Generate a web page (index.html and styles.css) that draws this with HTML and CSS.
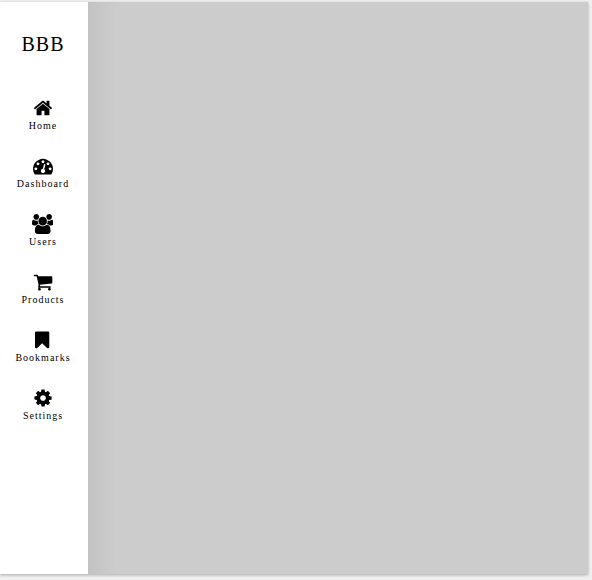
FILE: index.html
```html
<!doctype html>
<html>
<head>
	<meta charset="utf-8">
	<title>BBB</title>
	<link rel="stylesheet" href="styles.css">
</head>
<body>
	<div class="shell">
		<aside class="sidebar">
			<div class="brand">BBB</div>
			<nav class="nav">
				<a class="nav-item" href="#">
					<svg class="icon" viewBox="0 0 1792 1792"><path d="M1472 992v480q0 26-19 45t-45 19h-384v-384h-256v384h-384q-26 0-45-19t-19-45v-480q0-1 .5-3t.5-3l575-474 575 474q1 2 1 6zm223-69l-62 74q-8 9-21 11h-3q-13 0-21-7l-692-577-692 577q-12 8-24 7-13-2-21-11l-62-74q-8-10-7-23.500t11-21.500l719-599q32-26 76-26t76 26l244 204v-195q0-14 9-23t23-9h192q14 0 23 9t9 23v408l219 182q10 8 11 21.500t-7 23.500z"/></svg>
					<span>Home</span>
				</a>
				<a class="nav-item" href="#">
					<svg class="icon" viewBox="0 0 1792 1792"><path d="M384 1152q0-53-37.500-90.500t-90.500-37.500-90.500 37.500-37.500 90.500 37.500 90.500 90.500 37.500 90.500-37.500 37.500-90.500zm192-448q0-53-37.500-90.500t-90.500-37.500-90.500 37.500-37.500 90.500 37.500 90.500 90.500 37.500 90.500-37.500 37.500-90.500zm428 481l101-382q6-26-7.500-48.500t-38.500-29.500-48 6.500-30 39.500l-101 382q-60 5-107 43.500t-63 98.500q-20 77 20 146t117 89 146-20 89-117q16-60-6-117t-72-91zm660-33q0-53-37.500-90.500t-90.500-37.500-90.500 37.500-37.500 90.500 37.500 90.500 90.500 37.500 90.500-37.500 37.500-90.500zm-640-640q0-53-37.500-90.500t-90.500-37.500-90.500 37.500-37.500 90.500 37.500 90.500 90.500 37.500 90.500-37.500 37.500-90.500zm448 192q0-53-37.500-90.500t-90.500-37.500-90.500 37.500-37.500 90.500 37.500 90.500 90.500 37.500 90.500-37.500 37.500-90.500zm320 448q0 261-141 483-19 29-54 29h-1402q-35 0-54-29-141-221-141-483 0-182 71-348t191-286 286-191 348-71 348 71 286 191 191 286 71 348z"/></svg>
					<span>Dashboard</span>
				</a>
				<a class="nav-item" href="#">
					<svg class="icon" viewBox="0 0 1920 1792"><path d="M593 896q-162 5-265 128h-134q-82 0-138-40.500t-56-118.500q0-353 124-353 6 0 43.500 21t97.500 42.500 119 21.500q67 0 133-23-5 37-5 66 0 139 81 256zm1071 637q0 120-73 189.500t-194 69.500h-874q-121 0-194-69.500t-73-189.500q0-53 3.500-103.500t14-109 26.500-108.500 43-97.500 62-81 85.500-53.500 111.500-20q10 0 43 21.500t73 48 107 48 135 21.500 135-21.500 107-48 73-48 43-21.500q61 0 111.500 20t85.500 53.500 62 81 43 97.500 26.500 108.500 14 109 3.500 103.500zm-1024-1277q0 106-75 181t-181 75-181-75-75-181 75-181 181-75 181 75 75 181zm704 384q0 159-112.500 271.500t-271.500 112.500-271.500-112.500-112.500-271.500 112.500-271.500 271.500-112.500 271.500 112.500 112.500 271.500zm576 225q0 78-56 118.500t-138 40.500h-134q-103-123-265-128 81-117 81-256 0-29-5-66 66 23 133 23 59 0 119-21.500t97.500-42.500 43.500-21q124 0 124 353zm-128-609q0 106-75 181t-181 75-181-75-75-181 75-181 181-75 181 75 75 181z"/></svg>
					<span>Users</span>
				</a>
				<a class="nav-item" href="#">
					<svg class="icon" viewBox="0 0 1792 1792"><path d="M704 1536q0 52-38 90t-90 38-90-38-38-90 38-90 90-38 90 38 38 90zm896 0q0 52-38 90t-90 38-90-38-38-90 38-90 90-38 90 38 38 90zm128-1088v512q0 24-16.500 42.500t-40.500 21.500l-1044 122q13 60 13 70 0 16-24 64h920q26 0 45 19t19 45-19 45-45 19h-1024q-26 0-45-19t-19-45q0-11 8-31.500t16-36 21.500-40 15.500-29.500l-177-823h-204q-26 0-45-19t-19-45 19-45 45-19h256q16 0 28.500 6.500t19.500 15.500 13 24.500 8 26 5.500 29.500 4.500 26h1201q26 0 45 19t19 45z"/></svg>
					<span>Products</span>
				</a>
				<a class="nav-item" href="#">
					<svg class="icon" viewBox="0 0 1280 1792"><path d="M1164 128q23 0 44 9 33 13 52.500 41t19.500 62v1289q0 34-19.500 62t-52.500 41q-19 8-44 8-48 0-83-32l-441-424-441 424q-36 33-83 33-23 0-44-9-33-13-52.500-41t-19.500-62v-1289q0-34 19.500-62t52.500-41q21-9 44-9h1048z"/></svg>
					<span>Bookmarks</span>
				</a>
				<a class="nav-item" href="#">
					<svg class="icon" viewBox="0 0 1792 1792"><path d="M1152 896q0-106-75-181t-181-75-181 75-75 181 75 181 181 75 181-75 75-181zm512-109v222q0 12-8 23t-20 13l-185 28q-19 54-39 91 35 50 107 138 10 12 10 25t-9 23q-27 37-99 108t-94 71q-12 0-26-9l-138-108q-44 23-91 38-16 136-29 186-7 28-36 28h-222q-14 0-24.500-8.500t-11.500-21.500l-28-184q-49-16-90-37l-141 107q-10 9-25 9-14 0-25-11-126-114-165-168-7-10-7-23 0-12 8-23 15-21 51-66.500t54-70.500q-27-50-41-99l-183-27q-13-2-21-12.500t-8-23.500v-222q0-12 8-23t19-13l186-28q14-46 39-92-40-57-107-138-10-12-10-24 0-10 9-23 26-36 98.500-107.500t94.500-71.500q13 0 26 10l138 107q44-23 91-38 16-136 29-186 7-28 36-28h222q14 0 24.500 8.500t11.500 21.500l28 184q49 16 90 37l142-107q9-9 24-9 13 0 25 10 129 119 165 170 7 8 7 22 0 12-8 23-15 21-51 66.500t-54 70.500q26 50 41 98l183 28q13 2 21 12.500t8 23.500z"/></svg>
					<span>Settings</span>
				</a>
			</nav>
		</aside>
		<main class="content"></main>
	</div>
</body>
</html>
```

FILE: styles.css
```css
html, body {
	height: 100%;
}

body {
	margin: 0;
	padding: 2px 4px 6px 0;
	box-sizing: border-box;
	background-color: #f0f0f0;
	font-family: "Liberation Serif", serif;
	color: #000;
}

.shell {
	display: flex;
	height: 100%;
	box-shadow: 0 1px 3px rgba(0, 0, 0, 0.3);
}

.sidebar {
	width: 88px;
	flex-shrink: 0;
	background-color: #fff;
}

.brand {
	margin-top: 31px;
	font-size: 20px;
	line-height: 23px;
	letter-spacing: 1px;
	text-align: center;
	padding-right: 2px;
}

.nav {
	display: flex;
	flex-direction: column;
	margin-top: 42px;
	padding-right: 3px;
}

.nav-item {
	display: flex;
	flex-direction: column;
	align-items: center;
	height: 58px;
	color: #000;
	text-decoration: none;
	font-size: 10px;
	letter-spacing: 1px;
}

.icon {
	height: 20px;
	width: auto;
	fill: #000;
}

.nav-item span {
	margin-top: 2px;
	padding-left: 1px;
	line-height: 12px;
}

.content {
	flex: 1;
	background-color: #ccc;
	background-image: linear-gradient(to right, #c2c2c2, #ccc 28px);
}
```
